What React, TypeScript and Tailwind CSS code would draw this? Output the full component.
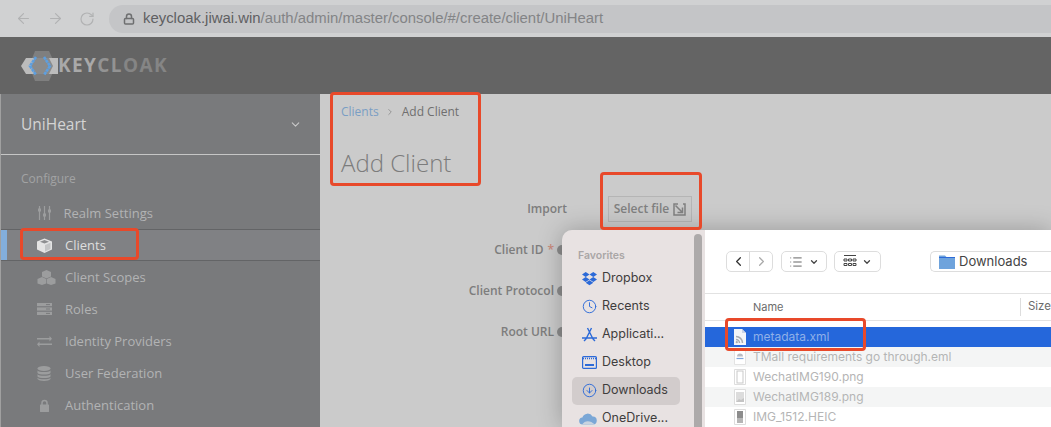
import { ChevronDown, ArrowLeft, ArrowRight, RotateCw, Lock, ChevronLeft, ChevronRight, List, Clock, ArrowDownCircle } from "lucide-react";
import type { ReactNode } from "react";

const c = "#9c9d9e";

const navItems: { label: string; icon: ReactNode; active?: boolean; tw: string }[] = [
  {
    label: "Realm Settings",
    tw: "w-[26.500px]",
    icon: (
      <svg width="15" height="14" viewBox="0 0 15 14" fill="none" stroke={c} strokeWidth="1.200">
        <path d="M2.500 0v14M7.500 0v14M12.500 0v14" />
        <path d="M1 4h3M6 9h3M11 5h3" strokeWidth="3" />
      </svg>
    ),
  },
  {
    label: "Clients",
    active: true,
    tw: "w-[28px]",
    icon: (
      <svg width="15" height="15" viewBox="0 0 15 15">
        <path d="M7.500 .5 15 3.500v8L7.500 15 0 11.500v-8Z" fill="#e4e4e4" />
        <path d="M7.500 2 12 3.800 7.500 5.600 3 3.800Z" fill="#8d8e90" />
        <path d="M8 7v6.500l5.500-2.600V4.800Z" fill="#c4c5c6" />
      </svg>
    ),
  },
  {
    label: "Client Scopes",
    tw: "w-[28px]",
    icon: (
      <svg width="19" height="15" viewBox="0 0 19 15" fill={c}>
        <path d="M9.500 0 14 2v4.500L9.500 8.500 5 6.500V2Z" />
        <path d="M5 7 9.200 9v4.500L5 15 .5 13.500V9Z" />
        <path d="M14 7 18.500 9v4.500L14 15 9.800 13.500V9Z" />
      </svg>
    ),
  },
  {
    label: "Roles",
    tw: "w-[28px]",
    icon: (
      <svg width="15" height="12" viewBox="0 0 15 12" fill={c}>
        <rect width="15" height="3.200" />
        <rect y="4.400" width="15" height="3.200" />
        <rect y="8.800" width="15" height="3.200" />
        <path d="M9 1.600h4M9 6h4M9 10.400h4" stroke="#797a7c" />
      </svg>
    ),
  },
  {
    label: "Identity Providers",
    tw: "w-[28px]",
    icon: (
      <svg width="15" height="11" viewBox="0 0 15 11" fill={c}>
        <path d="M0 2h12.500V0L15 2.800 12.500 5.500V3.600H0Z" />
        <path d="M15 7.500H2.500V5.500L0 8.300 2.500 11V9.100H15Z" />
      </svg>
    ),
  },
  {
    label: "User Federation",
    tw: "w-[28px]",
    icon: (
      <svg width="14" height="15" viewBox="0 0 14 15" fill={c}>
        <ellipse cx="7" cy="2.500" rx="6.500" ry="2.500" />
        <path d="M.5 4.500C2 6.500 12 6.500 13.500 4.500V7C12 9 2 9 .5 7ZM.5 8.300C2 10.300 12 10.300 13.500 8.300V10.500C12 12.500 2 12.500 .5 10.500ZM.5 11.800C2 13.800 12 13.800 13.500 11.800V13C12 15.500 2 15.500 .5 13Z" />
      </svg>
    ),
  },
  {
    label: "Authentication",
    tw: "w-[28px]",
    icon: (
      <svg width="15" height="13" viewBox="0 0 15 13">
        <path d="M5 6V4a2.500 2.500 0 0 1 5 0v2" fill="none" stroke={c} strokeWidth="1.500" />
        <rect x="3" y="5.500" width="9" height="7.500" rx=".5" fill={c} />
      </svg>
    ),
  },
];

function FileIcon({ kind }: { kind: string }) {
  if (kind === "xml") {
    return (
      <svg width="12" height="16" viewBox="0 0 12 16">
        <path d="M0 0h8l4 4v12H0Z" fill="#f2f4f8" />
        <path d="M8 0v4h4Z" fill="#c9d3e6" />
        <path d="M2 7.500a6.500 6.500 0 0 1 6.500 6.500M2 10.500A3.500 3.500 0 0 1 5.500 14" fill="none" stroke="#a9abb0" strokeWidth="1.500" />
        <circle cx="2.800" cy="13.200" r="1.100" fill="#a9abb0" />
      </svg>
    );
  }
  if (kind === "eml") {
    return (
      <svg width="12" height="16" viewBox="0 0 12 16">
        <path d="M.5.500h11v15H.5Z" fill="#ffffff" stroke="#e3e3e3" />
        <path d="M3 7.500a3 3 0 0 1 6 0Z" fill="#b9bcc4" />
        <path d="M2.500 9.500h7" stroke="#7ea6dc" strokeWidth="1.200" />
      </svg>
    );
  }
  if (kind === "phone") {
    return (
      <svg width="12" height="16" viewBox="0 0 12 16">
        <path d="M.5.500h11v15H.5Z" fill="#ffffff" stroke="#dddddd" />
        <rect x="3" y="2" width="6" height="12" fill="#ffffff" stroke="#c9c9c9" />
      </svg>
    );
  }
  if (kind === "image") {
    return (
      <svg width="12" height="16" viewBox="0 0 12 16">
        <path d="M.5.500h11v15H.5Z" fill="#ffffff" stroke="#dddddd" />
        <rect x="2" y="3" width="8" height="10" fill="#dcdcdc" />
        <path d="M2 13l3-3 2 1 3-2v4Z" fill="#c4c4c4" />
      </svg>
    );
  }
  return (
    <svg width="12" height="16" viewBox="0 0 12 16">
      <path d="M.5.500h11v15H.5Z" fill="#ffffff" stroke="#dddddd" />
      <rect x="3" y="2" width="6" height="12" fill="#8c8c8c" />
      <rect x="3" y="9" width="6" height="5" fill="#b5b5b5" />
    </svg>
  );
}

const files = [
  { name: "metadata.xml", kind: "xml", cls: "bg-[#2567db] text-[#8fb0e8]" },
  { name: "TMall requirements go through.eml", kind: "eml", cls: "bg-[#f4f5f5] text-[#b5b5b5]" },
  { name: "WechatIMG190.png", kind: "phone", cls: "bg-white text-[#b5b5b5]" },
  { name: "WechatIMG189.png", kind: "image", cls: "bg-[#f4f5f5] text-[#b5b5b5]" },
  { name: "IMG_1512.HEIC", kind: "heic", cls: "bg-white text-[#b5b5b5]" },
];

function Field({ label, star }: { label: string; star?: boolean }) {
  return (
    <div className="flex h-[41px] items-center justify-end text-[12px] font-semibold text-[#7d7d7d]">
      <span>{label}</span>
      {star && <span className="ml-1 text-[#c98a7c]">*</span>}
      <span className="ml-[3px] size-[10px] shrink-0 rounded-full bg-[#8c8c8c]" />
    </div>
  );
}

export default function App() {
  return (
    <div className="relative h-[427px] w-[1051px] overflow-hidden bg-[#cbcbcb] font-['Open_Sans',sans-serif]">
      {/* browser bar */}
      <div className="flex h-[37px] items-center bg-[#d0d1d2] pl-[15px] font-['Liberation_Sans',sans-serif]">
        <ArrowLeft size={17} strokeWidth={1.6} className="text-[#b1b2b3]" />
        <ArrowRight size={17} strokeWidth={1.6} className="ml-[15px] text-[#b1b2b3]" />
        <RotateCw size={16} strokeWidth={1.8} className="ml-[15px] text-[#b1b2b3]" />
        <div className="ml-[14px] flex h-[28px] flex-1 items-center rounded-l-full bg-[#c4c5c7] pl-[14px] text-[14.900px]">
          <Lock size={12} strokeWidth={3} className="text-[#6e6f70]" />
          <span className="ml-[8px] text-[#5f6062]">keycloak.jiwai.win</span>
          <span className="text-[#838486]">/auth/admin/master/console/#/create/client/UniHeart</span>
        </div>
      </div>

      {/* keycloak header */}
      <div className="flex h-[57px] items-center bg-[#646464] pl-[21px]">
        <svg width="37" height="30" viewBox="0 0 37 30" className="shrink-0">
          <polygon points="8,15 14,0 28,0 35,15 28,30 14,30" fill="#7f7f7f" />
          <polygon points="0,15 5,7 37,7 37,23 5,23" fill="#bcbcbc" />
          <polygon points="14,7 28,7 32,15 28,23 14,23 10,15" fill="#8b8b8b" />
          <path d="M15 6 L9 15 L15 24 M23 6 L29 15 L23 24" fill="none" stroke="#5d9fe0" strokeWidth="2.600" strokeDasharray="3 .6" />
        </svg>
        <span className="text-[19px] font-bold leading-none tracking-[1.400px] text-[#a9a9a9]">
          KEY<span className="text-[#939393]">CL</span>
          <span className="text-[#858585]">OAK</span>
        </span>
      </div>

      <div className="flex h-[333px]">
        {/* sidebar */}
        <aside className="w-[320px] shrink-0 border-l border-[#a0a0a0] bg-[#797a7c]">
          <div className="flex h-[61px] items-center justify-between border-b border-[#c6c6c6] pl-[20px] pr-[18px] text-[15.500px] text-[#d4d4d4]">
            <span className="pt-[2px]">UniHeart</span>
            <ChevronDown size={13} className="text-[#c9c9c9]" />
          </div>
          <div className="pl-[20px] pt-[15px] text-[12px] leading-[17px] text-[#a2a3a4]">Configure</div>
          <nav className="mt-[10px]">
            {navItems.map((item) => (
              <div
                key={item.label}
                className={`flex h-[32px] items-center pl-[36px] text-[13px] ${
                  item.active
                    ? "border-y border-[#636466] bg-[#808184] text-[#dedede] shadow-[inset_6px_0_0_#83aedb]"
                    : "text-[#b2b3b4]"
                }`}
              >
                <span className={`flex shrink-0 items-center ${item.tw}`}>{item.icon}</span>
                <span className="pt-[2px]">{item.label}</span>
              </div>
            ))}
          </nav>
        </aside>

        {/* main */}
        <main className="flex-1 pl-[21px] pt-[9px]">
          <div className="flex items-center text-[12px] leading-[18px]">
            <span className="text-[#7a9ec4]">Clients</span>
            <ChevronRight size={10} className="mx-[6.500px] text-[#8a8a8a]" />
            <span className="text-[#6f6f6f]">Add Client</span>
          </div>
          <h1 className="mt-[25px] text-[24px] font-light leading-[34px] text-[#7c7c7c]">Add Client</h1>
          <div className="mt-[8px] w-[226px]">
            <div className="flex h-[41px] items-center justify-end text-[12px] font-semibold text-[#7d7d7d]">Import</div>
            <Field label="Client ID" star />
            <Field label="Client Protocol" />
            <Field label="Root URL" />
          </div>
        </main>
      </div>

      <div className="absolute left-[608px] top-[196px] flex h-[26px] w-[84px] items-center justify-center gap-[4px] border border-[#b5b5b5] bg-[#c9c9c9] text-[12px] font-semibold text-[#808080]">
        Select file
        <svg width="13" height="13" viewBox="0 0 13 13" fill="none" stroke="#808080" strokeWidth="1.500">
          <path d="M5 1H1v11h11V1H10" />
          <path d="M2.500 2.500 9 9M9.500 4.500v5h-5" />
        </svg>
      </div>

      {/* file dialog */}
      <div className="absolute left-[562px] top-[230px] flex h-[197px] w-[489px] overflow-hidden rounded-tl-[10px] font-['Inter',sans-serif] shadow-[0_0_24px_rgba(0,0,0,0.25)]">
        <div className="relative w-[143px] shrink-0 bg-[#e8e2e2] pl-[10px] pt-[18px] text-[12.500px] text-[#3f3d3d]">
          <div className="pl-[6px] text-[10.500px] font-semibold text-[#aaa6a6]">Favorites</div>
          <div className="mt-px flex h-[28px] items-center pl-[10px]">
            <svg width="15" height="14" viewBox="0 0 15 14" fill="#2c6ad8" className="shrink-0">
              <path d="M3.700 0 7.500 2.500 3.700 5 0 2.500ZM11.300 0 15 2.500 11.300 5 7.500 2.500ZM3.700 5 7.500 7.500 3.700 10 0 7.500ZM11.300 5 15 7.500 11.300 10 7.500 7.500ZM7.500 8.300 11.300 10.800 7.500 13.300 3.700 10.800Z" />
            </svg>
            <span className="ml-[5px]">Dropbox</span>
          </div>
          <div className="flex h-[28px] items-center pl-[10px]">
            <Clock size={15} strokeWidth={1.500} className="shrink-0 text-[#2c6ad8]" />
            <span className="ml-[5px]">Recents</span>
          </div>
          <div className="flex h-[28px] items-center pl-[10px]">
            <svg width="15" height="15" viewBox="0 0 15 15" fill="none" stroke="#2c6ad8" strokeWidth="1.400" className="shrink-0">
              <path d="M5.500 1 11 12M9.500 1 4 12M0 11h15M2 14l2-2M13 14l-2-2" />
            </svg>
            <span className="ml-[5px]">Applicati...</span>
          </div>
          <div className="flex h-[28px] items-center pl-[10px]">
            <svg width="15" height="13" viewBox="0 0 15 13" fill="none" className="shrink-0">
              <rect x=".6" y=".6" width="13.800" height="11.800" rx="1" stroke="#2c6ad8" strokeWidth="1.200" />
              <path d="M1 2.500h13" stroke="#2c6ad8" strokeWidth="1.500" strokeDasharray="1 1" />
              <rect x="3" y="8" width="9" height="2" fill="#2c6ad8" />
            </svg>
            <span className="ml-[5px]">Desktop</span>
          </div>
          <div className="flex h-[28px] w-[108px] items-center rounded-[5px] bg-[#d2cccc] pl-[10px]">
            <ArrowDownCircle size={15} strokeWidth={1.500} className="shrink-0 text-[#2c6ad8]" />
            <span className="ml-[5px]">Downloads</span>
          </div>
          <div className="flex h-[28px] items-center pl-[7px]">
            <svg width="18" height="13" viewBox="0 0 18 13" className="shrink-0">
              <path d="M4 12.500a3.500 3.500 0 0 1-.6-7A5.500 5.500 0 0 1 13.500 4.500 4 4 0 0 1 14 12.500Z" fill="#7ba7d6" />
              <path d="M3 12.500C6 8 11 8 16 12.500Z" fill="#c9d4e0" />
            </svg>
            <span className="ml-[5px]">OneDrive...</span>
          </div>
          <div className="absolute bottom-0 right-[3px] top-[4px] w-[8px] rounded-t-full bg-[#adaaaa]" />
        </div>

        <div className="min-w-0 flex-1 bg-white">
          <div className="flex h-[63px] items-start pl-[21px] pt-[21px]">
            <div className="flex h-[21px] w-[47px] rounded-[5px] border border-[#dddddd]">
              <div className="flex flex-1 items-center justify-center border-r border-[#dddddd]">
                <ChevronLeft size={15} className="text-[#333333]" />
              </div>
              <div className="flex flex-1 items-center justify-center">
                <ChevronRight size={15} className="text-[#aaaaaa]" />
              </div>
            </div>
            <div className="ml-[8px] flex h-[21px] w-[46px] items-center justify-center gap-[6px] rounded-[5px] border border-[#dddddd]">
              <List size={14} strokeWidth={1.400} className="text-[#444444]" />
              <ChevronDown size={10} strokeWidth={3} className="text-[#444444]" />
            </div>
            <div className="ml-[7px] flex h-[21px] w-[47px] items-center justify-center gap-[5px] rounded-[5px] border border-[#dddddd]">
              <svg width="14" height="13" viewBox="0 0 14 13" fill="none" stroke="#444444">
                <path d="M1 .5h12M1 4h3v2H1ZM5.500 4h3v2h-3ZM10 4h3v2h-3ZM1 8.500h3v2H1ZM5.500 8.500h3v2h-3ZM10 8.500h3v2h-3Z" />
              </svg>
              <ChevronDown size={10} strokeWidth={3} className="text-[#444444]" />
            </div>
            <div className="ml-[49px] flex h-[21px] flex-1 items-center rounded-l-[5px] border border-r-0 border-[#dddddd] pl-[8px] text-[13px] text-[#444444]">
              <svg width="16" height="15" viewBox="0 0 16 15" className="shrink-0">
                <path d="M0 1.500h6l1.500 1.500H16v12H0Z" fill="#6ea3dc" />
                <rect y="3" width="16" height="1" fill="#2c6ad8" />
              </svg>
              <span className="ml-[4px]">Downloads</span>
            </div>
          </div>
          <div className="flex h-[28px] items-center border-y border-[#e2e2e2] pl-[48px] text-[11px] text-[#6b6b6b]">
            <span className="w-[269px]">Name</span>
            <span className="flex h-[18px] items-center border-l border-[#dddddd] pl-[7px] text-[11.500px]">Size</span>
          </div>
          <div className="mt-[6px] text-[12px]">
            {files.map((f) => (
              <div key={f.name} className={`flex h-[20px] items-center whitespace-nowrap pl-[29px] ${f.cls}`}>
                <FileIcon kind={f.kind} />
                <span className="ml-[7px]">{f.name}</span>
              </div>
            ))}
          </div>
        </div>
      </div>

      {/* red callouts */}
      <div className="absolute left-[330px] top-[92px] h-[94px] w-[151px] rounded-[4px] border-[3px] border-[#e8492a]" />
      <div className="absolute left-[600px] top-[172px] h-[58px] w-[102px] rounded-[4px] border-[3px] border-[#e8492a]" />
      <div className="absolute left-[20px] top-[228px] h-[32px] w-[119px] rounded-[4px] border-[3px] border-[#e8492a]" />
      <div className="absolute left-[725px] top-[318px] h-[33px] w-[141px] rounded-[4px] border-[3px] border-[#e8492a]" />
    </div>
  );
}
